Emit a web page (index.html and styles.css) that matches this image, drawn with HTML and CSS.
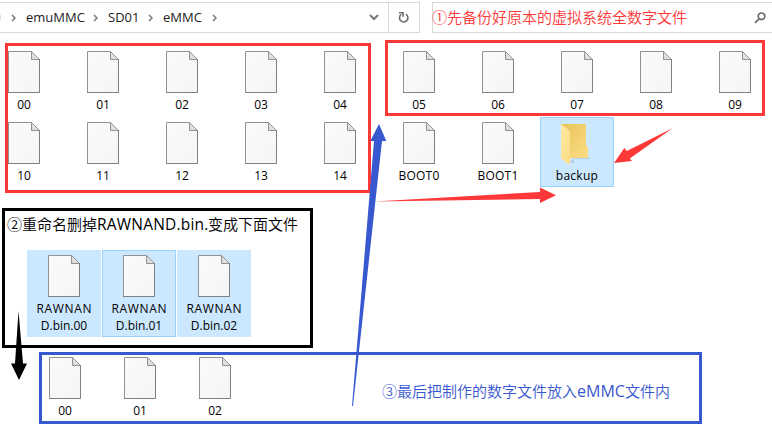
FILE: index.html
```
<!DOCTYPE html>
<html lang="zh-CN">
<head>
<meta charset="utf-8">
<title>eMMC</title>
<link rel="stylesheet" href="styles.css">
</head>
<body>
<svg class="defs" width="0" height="0" aria-hidden="true">
  <defs>
    <linearGradient id="paper" x1="0" y1="0" x2="1" y2="1"><stop offset="0" stop-color="#fafafa"/><stop offset=".5" stop-color="#f7f8f9"/><stop offset="1" stop-color="#f3f5f7"/></linearGradient>
    <linearGradient id="fold" x1="0" y1="1" x2="1" y2="0"><stop offset="0" stop-color="#d5d5d5"/><stop offset="1" stop-color="#f4f4f4"/></linearGradient>
    <linearGradient id="back" x1="0" y1="0" x2="1" y2="1"><stop offset="0" stop-color="#e9c45c"/><stop offset="1" stop-color="#fbdc83"/></linearGradient>
    <linearGradient id="flap" x1="0" y1="0" x2="1" y2="1"><stop offset="0" stop-color="#ffeaa6"/><stop offset="1" stop-color="#fbdc80"/></linearGradient>
    <symbol id="file" viewBox="0 0 32 42">
      <path d="M.5.5H23.5L31.5 8.5V41.5H.5Z" fill="url(#paper)" stroke="#929292"/>
      <path d="M23.5.5V8.5H31.5Z" fill="url(#fold)" stroke="#929292"/>
      <path d="M31.5 8V41.5H0" fill="none" stroke="#808080"/>
    </symbol>
  </defs>
</svg>
<main class="window">
  <header class="toolbar">
    <nav class="address">
      <span class="edge"></span>
      <svg class="chev" viewBox="0 0 5 8"><path d="M1 1L4 4L1 7"/></svg>
      <span class="crumb c1">emuMMC</span>
      <svg class="chev" viewBox="0 0 5 8"><path d="M1 1L4 4L1 7"/></svg>
      <span class="crumb c2">SD01</span>
      <svg class="chev" viewBox="0 0 5 8"><path d="M1 1L4 4L1 7"/></svg>
      <span class="crumb c3">eMMC</span>
      <svg class="chev" viewBox="0 0 5 8"><path d="M1 1L4 4L1 7"/></svg>
      <svg class="drop" viewBox="0 0 10 7"><path d="M1 1L5 5L9 1"/></svg>
    </nav>
    <div class="refresh"><svg viewBox="0 0 12 13"><path d="M7.8 3.1A4.2 4.2 0 1 1 3.2 3.4"/><path d="M1 1.8H5V5.8"/></svg></div>
    <div class="search">
      <span class="note red">①先备份好原本的虚拟系统全数字文件</span>
      <svg class="lens" viewBox="0 0 12 12"><circle cx="7.5" cy="4.3" r="3.3"/><path d="M5 6.8L1 10.8"/></svg>
    </div>
  </header>
  <section class="files">
    <div class="tile"><svg><use href="#file"/></svg><span>00</span></div>
    <div class="tile"><svg><use href="#file"/></svg><span>01</span></div>
    <div class="tile"><svg><use href="#file"/></svg><span>02</span></div>
    <div class="tile"><svg><use href="#file"/></svg><span>03</span></div>
    <div class="tile"><svg><use href="#file"/></svg><span>04</span></div>
    <div class="tile"><svg><use href="#file"/></svg><span>05</span></div>
    <div class="tile"><svg><use href="#file"/></svg><span>06</span></div>
    <div class="tile"><svg><use href="#file"/></svg><span>07</span></div>
    <div class="tile"><svg><use href="#file"/></svg><span>08</span></div>
    <div class="tile"><svg><use href="#file"/></svg><span>09</span></div>
    <div class="tile"><svg><use href="#file"/></svg><span>10</span></div>
    <div class="tile"><svg><use href="#file"/></svg><span>11</span></div>
    <div class="tile"><svg><use href="#file"/></svg><span>12</span></div>
    <div class="tile"><svg><use href="#file"/></svg><span>13</span></div>
    <div class="tile"><svg><use href="#file"/></svg><span>14</span></div>
    <div class="tile"><svg><use href="#file"/></svg><span class="name">BOOT0</span></div>
    <div class="tile"><svg><use href="#file"/></svg><span class="name">BOOT1</span></div>
    <div class="tile selected focused"><svg viewBox="0 0 32 42"><path d="M8 40L13 37V41H9Z" fill="#b3cfe3"/><path d="M26 35H30L27 37H9Z" fill="#b3cfe3"/><path d="M0 2H25V23L27 25V36H6Z" fill="url(#back)"/><path d="M0 2L9 9V41.500L7 42L0 36.500Z" fill="url(#flap)"/></svg><span class="name">backup</span></div>
  </section>
  <section class="panel rename">
    <p class="note">②重命名删掉<span class="latin bin">RAWNAND.bin.</span>变成下面文件</p>
    <div class="row">
      <div class="tile selected"><svg><use href="#file"/></svg><span><b>RAWNAN</b><br>D.bin.00</span></div>
      <div class="tile selected focused"><svg><use href="#file"/></svg><span><b>RAWNAN</b><br>D.bin.01</span></div>
      <div class="tile selected"><svg><use href="#file"/></svg><span><b>RAWNAN</b><br>D.bin.02</span></div>
    </div>
  </section>
  <section class="panel result">
    <div class="row">
      <div class="tile"><svg><use href="#file"/></svg><span>00</span></div>
      <div class="tile"><svg><use href="#file"/></svg><span>01</span></div>
      <div class="tile"><svg><use href="#file"/></svg><span>02</span></div>
    </div>
    <p class="note blue">③最后把制作的数字文件放入<span class="latin mmc">eMMC</span>文件内</p>
  </section>
  <svg class="marks" viewBox="0 0 772 443" aria-hidden="true">
    <rect x="6.500" y="44.500" width="363" height="147" class="frame"/>
    <rect x="386.500" y="41.500" width="377" height="73" class="frame"/>
    <path class="r" d="M374 201.500L540 192V187.500L556 195.300L540 203V199Z"/>
    <path class="r" d="M672.500 128.300L626.800 151L624.300 148L614 163L632 161L629.800 158.500Z"/>
    <path class="b" d="M379 124L386.300 141H382L353 406H352L374 141H370.300Z"/>
    <path d="M18.500 311L23 363.500H27L19 380L11 363.500H15Z"/>
  </svg>
</main>
</body>
</html>
```
FILE: styles.css
```
* { box-sizing: border-box; }
body { margin: 0; background: #fff; color: #000; font: 12px/16px "Open Sans", "Noto Sans CJK SC", sans-serif; overflow: hidden; }
.defs { position: absolute; }
.window { position: relative; width: 772px; height: 443px; overflow: hidden; }
svg { display: block; flex: none; }
.toolbar { display: flex; height: 33px; padding-top: 2px; }
.address, .refresh, .search { height: 31px; border: 1px solid #d9d9d9; display: flex; align-items: center; }
.address { width: 389px; border-left: 0; }
.edge { width: 1px; height: 5px; background: #ddd; margin-right: 10px; }
.chev { width: 5px; height: 8px; }
.chev path, .drop path { fill: none; stroke: #777; stroke-width: 1.5; }
.crumb { font-size: 13px; line-height: 18px; color: #222; white-space: nowrap; margin-top: -2px; padding-left: 10px; }
.c1 { width: 77px; }
.c2 { width: 50px; }
.c3 { width: 59px; }
.drop { width: 10px; height: 7px; margin-left: auto; margin-right: 9px; }
.drop path { stroke-width: 2; }
.refresh { width: 31px; border-left: 0; justify-content: center; }
.refresh svg { width: 12px; height: 13px; fill: none; stroke: #6e6e6e; stroke-width: 1.6; }
.search { flex: 1; margin-left: 12px; border-right: 0; justify-content: space-between; padding-right: 6px; }
.lens { width: 12px; height: 12px; fill: none; stroke: #6e6e6e; stroke-width: 1.7; }
.note { margin: 0; font-size: 15px; line-height: 22px; font-family: "Noto Sans CJK SC", sans-serif; font-weight: 350; white-space: nowrap; }
.latin { font-family: "Open Sans", sans-serif; font-weight: 400; display: inline-block; line-height: 20px; }
.bin { width: 111px; font-size: 15.500px; letter-spacing: .2px; }
.mmc { width: 48px; font-size: 16px; }
.search .note { margin: -2px 0 0 -1px; }
.red { color: #fc3838; }
.blue { color: #3858d0; }
.files { display: grid; grid-template-columns: repeat(10, 74px); gap: 1px 5px; margin: 13px 0 0 -13px; }
.tile { width: 74px; height: 70px; padding-top: 5px; display: flex; flex-direction: column; align-items: center; text-align: center; }
.tile svg { width: 32px; height: 42px; }
.tile span { margin-top: 3px; line-height: 17px; }
.tile b { font-weight: 400; letter-spacing: .7px; margin-right: -.7px; }
.tile .name { letter-spacing: .25px; }
.selected { background: #cce8ff; }
.focused { outline: 1px solid #99d1ff; outline-offset: -1px; }
.panel { border: 3px solid #000; }
.rename { width: 311px; height: 140px; margin: 21px 0 0 2px; padding: 2px 0 0 2px; }
.rename .note { height: 22px; }
.row { display: flex; gap: 1px; }
.rename .row { margin: 15px 0 0 20px; }
.rename .tile { height: 87px; }
.result { width: 663px; height: 72px; margin: 4px 0 0 39px; border-color: #3858d0; display: flex; }
.result .row { margin: -3px 0 0 -14px; }
.result .note { margin: 25px 0 0 130px; }
.marks { position: absolute; inset: 0; width: 772px; height: 443px; }
.frame { fill: none; stroke: #fc3838; stroke-width: 3; }
.r { fill: #fc3838; }
.b { fill: #3858d0; }
```
